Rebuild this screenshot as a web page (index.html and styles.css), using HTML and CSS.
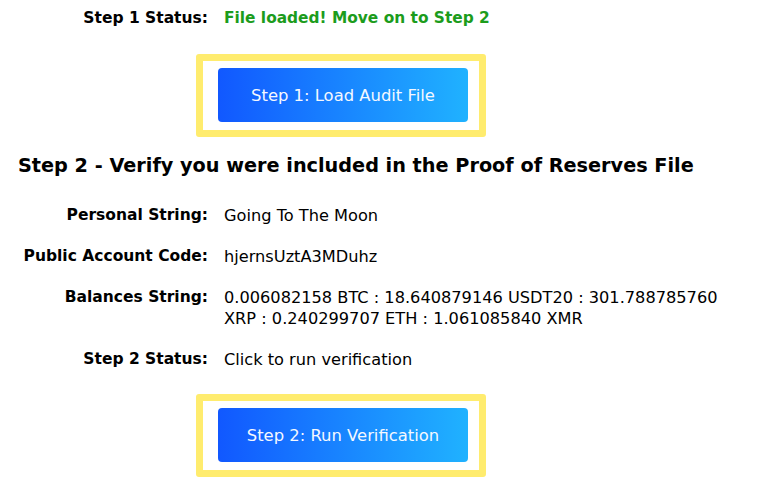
FILE: index.html
```html
<!DOCTYPE html>
<html>
<head>
<meta charset="utf-8">
<link rel="stylesheet" href="styles.css">
</head>
<body>
<div class="page">
  <div class="row first">
    <div class="label">Step 1 Status:</div>
    <div class="value ok">File loaded! Move on to Step 2</div>
  </div>
  <div class="btn-wrap">
    <div class="highlight">
      <button class="btn">Step 1: Load Audit File</button>
    </div>
  </div>
  <h2 class="heading">Step 2 - Verify you were included in the Proof of Reserves File</h2>
  <div class="row">
    <div class="label">Personal String:</div>
    <div class="value">Going To The Moon</div>
  </div>
  <div class="row">
    <div class="label">Public Account Code:</div>
    <div class="value">hjernsUztA3MDuhz</div>
  </div>
  <div class="row">
    <div class="label">Balances String:</div>
    <div class="value">0.006082158 BTC : 18.640879146 USDT20 : 301.788785760 XRP : 0.240299707 ETH : 1.061085840 XMR</div>
  </div>
  <div class="row">
    <div class="label">Step 2 Status:</div>
    <div class="value">Click to run verification</div>
  </div>
  <div class="btn-wrap second">
    <div class="highlight">
      <button class="btn">Step 2: Run Verification</button>
    </div>
  </div>
</div>
</body>
</html>
```
FILE: styles.css
```css
html, body {
  margin: 0;
  padding: 0;
  background: #fff;
}
body {
  font-family: "DejaVu Sans", Verdana, sans-serif;
  color: #000;
  font-size: 16.2px;
}
.page {
  padding-top: 8px;
}
.row {
  display: grid;
  grid-template-columns: 208px 510px;
  column-gap: 16px;
  line-height: 21px;
  margin-bottom: 20px;
}
.row.first {
  margin-bottom: 0;
}
.label {
  text-align: right;
  font-weight: bold;
  font-size: 15.5px;
}
.value.ok {
  color: #1c9c1c;
  font-weight: bold;
  font-size: 15.4px;
}
.btn-wrap {
  display: flex;
  padding-left: 196px;
  margin-top: 25px;
}
.btn-wrap.second {
  margin-top: 24px;
}
.highlight {
  border: 7px solid #ffec6e;
  border-radius: 3px;
  padding: 7px 11px 8px 15px;
}
.btn {
  display: block;
  width: 250px;
  height: 54px;
  border: none;
  border-radius: 4px;
  background: linear-gradient(to right, #1158ff, #20b2ff);
  color: #f4f8ff;
  font-family: "DejaVu Sans", Verdana, sans-serif;
  font-size: 16.4px;
  padding: 0;
}
.heading {
  font-size: 19.25px;
  font-weight: bold;
  margin: 18px 0 28px 18px;
  line-height: 22px;
}
```
